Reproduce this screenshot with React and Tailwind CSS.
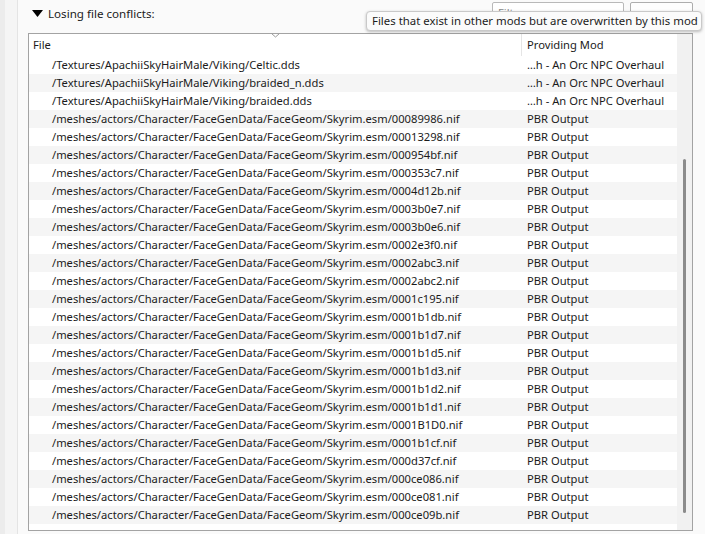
import React from "react";

const files = [
  ["/Textures/ApachiiSkyHairMale/Viking/Celtic.dds", "…h - An Orc NPC Overhaul"],
  ["/Textures/ApachiiSkyHairMale/Viking/braided_n.dds", "…h - An Orc NPC Overhaul"],
  ["/Textures/ApachiiSkyHairMale/Viking/braided.dds", "…h - An Orc NPC Overhaul"],
  ...[
    "00089986", "00013298", "000954bf", "000353c7", "0004d12b", "0003b0e7", "0003b0e6",
    "0002e3f0", "0002abc3", "0002abc2", "0001c195", "0001b1db", "0001b1d7", "0001b1d5",
    "0001b1d3", "0001b1d2", "0001b1d1", "0001B1D0", "0001b1cf", "000d37cf", "000ce086",
    "000ce081", "000ce09b",
  ].map((id) => [
    `/meshes/actors/Character/FaceGenData/FaceGeom/Skyrim.esm/${id}.nif`,
    "PBR Output",
  ]),
];

export default function App() {
  return (
    <div
      className="relative flex w-[705px] h-[534px] overflow-hidden bg-[#fafafa] text-[11.2px] text-[#1b1b1b]"
      style={{ fontFamily: '"Noto Sans", "Liberation Sans", sans-serif' }}
    >
      <div className="w-[5px] bg-[#ececec]" />
      <div className="w-[13px] bg-[#f5f5f5] border-r border-[#e4e4e4]" />
      <div className="flex-1 flex flex-col">
        <div className="h-[33px] flex items-start">
          <div className="flex items-center ml-[14px] mt-[7px] h-[14px]">
            <svg width="12" height="8" viewBox="0 0 12 8" className="mt-[-1px]">
              <polygon points="0,0 11,0 5.5,7" fill="#000" />
            </svg>
            <span className="ml-[4px] leading-[14px] text-[11.6px]">Losing file conflicts:</span>
          </div>
          <div className="ml-auto flex items-start mt-[2px] mr-[12px]">
            <div className="w-[132px] h-[22px] border border-[#b9b9b9] bg-white rounded-[2px] pl-[5px] pt-[3px] text-[#8a8a8a] leading-[14px]">
              Filter
            </div>
            <div className="ml-[6px] w-[63px] h-[22px] border border-[#adadad] bg-[#fdfdfd] rounded-[2px]" />
          </div>
        </div>
        <div className="flex ml-[10px] mr-[12px] h-[498px]">
          <div className="flex-1 flex border border-[#a3a3a3] bg-white">
            <div className="flex-1 flex flex-col">
              <div className="relative flex h-[22px] bg-white">
                <div className="w-[493px] pl-[4px] leading-[22px] border-r border-[#e5e5e5]">File</div>
                <div className="flex-1 pl-[5px] leading-[22px]">Providing Mod</div>
                <svg
                  width="9"
                  height="5"
                  viewBox="0 0 9 5"
                  className="absolute left-[242px] top-[-1px]"
                >
                  <polyline points="0.5,0.5 4.5,4 8.5,0.5" fill="none" stroke="#9a9a9a" strokeWidth="1" />
                </svg>
              </div>
              {files.map(([f, m], i) => (
                <div
                  key={i}
                  className={`flex h-[18px] leading-[18px] ${i % 2 === 1 ? "bg-[#f5f5f5]" : "bg-white"}`}
                >
                  <div className="w-[493px] pl-[23px] whitespace-nowrap overflow-hidden">{f}</div>
                  <div className="flex-1 pl-[5px] whitespace-nowrap overflow-hidden">{m}</div>
                </div>
              ))}
            </div>
            <div className="relative w-[15px] bg-[#f1f1f1]">
              <div className="absolute left-[6px] top-[125px] w-[3px] h-[354px] rounded-full bg-[#8b8b8b]" />
            </div>
          </div>
        </div>
      </div>
      <div className="absolute left-[366px] top-[11px] w-[336px] h-[20px] bg-[#fbfbfb] border border-[#c9c9c9] rounded-[4px] shadow-[0_1px_3px_rgba(0,0,0,0.25)] pl-[5px] leading-[18px] whitespace-nowrap text-[11.4px]">
        Files that exist in other mods but are overwritten by this mod
      </div>
    </div>
  );
}
